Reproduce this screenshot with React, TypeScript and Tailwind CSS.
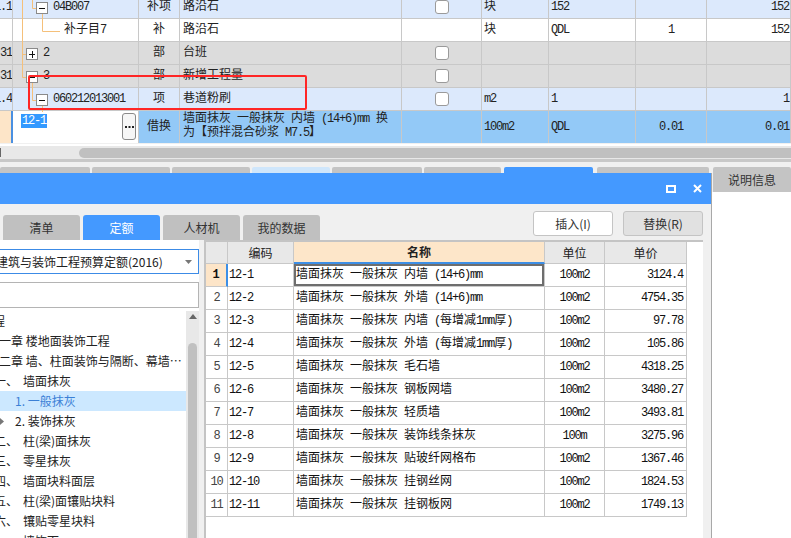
import React from 'react';

const ui = "font-['Noto_Sans_CJK_SC','Noto_Sans',sans-serif]";
const mono = "font-['Liberation_Mono','Noto_Sans_CJK_SC',monospace]";

// Latin runs in the data grids are narrowed so they sit like the bitmap font of the original
const Txt = ({ s }: { s: string }) => (
  <span className="whitespace-pre">
    {s.split(/([\u0000-\u00ff]+)/).map((p, i) =>
      /[\u0000-\u00ff]/.test(p) ? (
        <span key={i} className="tracking-[-1.2px]">
          {p}
        </span>
      ) : (
        p
      )
    )}
  </span>
);

const topRows = [
  { no: '1.1', pad: 'pl-[40px]', code: '04B007', type: '补项', name: '路沿石', check: true, unit: '块', expr: '152', qty: '', total: '152', bg: 'bg-[#dce9fc]' },
  { no: '', pad: 'pl-[51px]', code: '补子目7', type: '补', name: '路沿石', check: false, unit: '块', expr: 'QDL', qty: '1', total: '152', bg: 'bg-white' },
  { no: '31', pad: 'pl-[30px]', code: '2', type: '部', name: '台班', check: true, unit: '', expr: '', qty: '', total: '', bg: 'bg-[#dcdcdc]' },
  { no: '31', pad: 'pl-[30px]', code: '3', type: '部', name: '新增工程量', check: true, unit: '', expr: '', qty: '', total: '', bg: 'bg-[#dcdcdc]' },
  { no: '1.4', pad: 'pl-[40px]', code: '060212013001', type: '项', name: '巷道粉刷', check: true, unit: 'm2', expr: '1', qty: '', total: '1', bg: 'bg-[#dce9fc]' },
];

const cell = 'border-r border-b border-[#c8c8c8] flex items-center overflow-hidden whitespace-nowrap';

function TopTable() {
  return (
    <div className={`relative h-[144px] overflow-hidden ${mono} text-[12px] text-[#222]`}>
      <div className="-mt-[4px]">
        {topRows.map((r, i) => (
          <div key={i} className={`flex h-[23px] ${r.bg}`}>
            <div className={`${cell} w-[13px] justify-end`}>
              <Txt s={r.no} />
            </div>
            <div className={`${cell} w-[126px] ${r.pad}`}>
              <Txt s={r.code} />
            </div>
            <div className={`${cell} w-[41px] justify-center`}>{r.type}</div>
            <div className={`${cell} w-[222px] pl-[3px]`}>{r.name}</div>
            <div className={`${cell} w-[80px] justify-center`}>
              {r.check && <div className="w-[14px] h-[14px] rounded-[3px] border border-[#9a9a9a] bg-white" />}
            </div>
            <div className={`${cell} w-[67px] pl-[2px]`}>
              <Txt s={r.unit} />
            </div>
            <div className={`${cell} w-[87px] pl-[2px]`}>
              <Txt s={r.expr} />
            </div>
            <div className={`${cell} w-[71px] justify-center`}>
              <Txt s={r.qty} />
            </div>
            <div className={`${cell} w-[84px] justify-end pr-[1px]`}>
              <Txt s={r.total} />
            </div>
          </div>
        ))}
        <div className="flex h-[32px]">
          <div className="w-[13px] bg-[#fde5c8] border-r-2 border-[#4a90e2]" />
          <div className="w-[126px] bg-white border-r border-[#c8c8c8] flex justify-between items-start">
            <span className="ml-[8px] mt-[3px] px-[1px] leading-[14px] bg-[#3399ff] text-white">
              <Txt s="12-1" />
            </span>
            <div className="mt-[2px] mr-[2px] w-[14px] h-[27px] rounded-[3px] border border-[#8a8a8a] bg-[#f6f6f6] flex items-center justify-center">
              <svg width="9" height="2" viewBox="0 0 9 2">
                <rect x="0" y="0" width="2" height="2" fill="#222" />
                <rect x="3.5" y="0" width="2" height="2" fill="#222" />
                <rect x="7" y="0" width="2" height="2" fill="#222" />
              </svg>
            </div>
          </div>
          <div className="flex flex-1 bg-[#93c9f7]">
            <div className={`${cell} border-b-0 w-[41px] justify-center`}>借换</div>
            <div className="w-[222px] border-r border-[#c8c8c8] pl-[3px] pt-[1px] leading-[14px] whitespace-nowrap overflow-hidden">
              <div>
                <Txt s="墙面抹灰 一般抹灰 内墙 (14+6)mm" />
                <span className="ml-[7px]">换</span>
              </div>
              <div>
                <Txt s="为【预拌混合砂浆 M7.5】" />
              </div>
            </div>
            <div className={`${cell} border-b-0 w-[80px]`} />
            <div className={`${cell} border-b-0 w-[67px] pl-[2px]`}>
              <Txt s="100m2" />
            </div>
            <div className={`${cell} border-b-0 w-[87px] pl-[2px]`}>
              <Txt s="QDL" />
            </div>
            <div className={`${cell} border-b-0 w-[71px] justify-center`}>
              <Txt s="0.01" />
            </div>
            <div className={`${cell} border-b-0 w-[84px] justify-end pr-[1px]`}>
              <Txt s="0.01" />
            </div>
          </div>
        </div>
      </div>

      {/* tree connector lines and expand boxes */}
      <svg className="absolute left-0 top-0" width="140" height="144" viewBox="0 0 140 144">
        <g stroke="#f5c07a" strokeWidth="1" fill="none">
          <path d="M22.5 0 V77.5 M22.5 54.5 H26 M22.5 77.5 H26" />
          <path d="M32.5 0 V8.5 H36" />
          <path d="M42.5 14 V31.5 H60" />
          <path d="M32.5 83 V100.5 H36" />
          <path d="M42.5 106 V112" />
        </g>
        <g stroke="#8a8a8a" fill="#fff">
          <rect x="36.5" y="2.5" width="11" height="11" />
          <rect x="26.5" y="48.5" width="11" height="11" />
          <rect x="26.5" y="71.5" width="11" height="11" />
          <rect x="36.5" y="94.5" width="11" height="11" />
        </g>
        <g stroke="#111" strokeWidth="1">
          <path d="M39 8.5 H45" />
          <path d="M29 54.5 H35 M32.5 51 V58" />
          <path d="M29 77.5 H35" />
          <path d="M39 100.5 H45" />
        </g>
      </svg>

      {/* red annotation box */}
      <div className="absolute left-[28px] top-[75px] w-[279px] h-[35px] border-2 border-[#ff2626] rounded-[2px]" />
    </div>
  );
}

const tree: { label: string; kind: 'top' | 'ch' | 'sec' | 'sub'; pre?: string; sel?: boolean; arrow?: boolean }[] = [
  { label: '工程', kind: 'top' },
  { label: '一章 楼地面装饰工程', kind: 'ch' },
  { label: '二章 墙、柱面装饰与隔断、幕墙工程', kind: 'ch' },
  { pre: '一、', label: '墙面抹灰', kind: 'sec' },
  { label: '1. 一般抹灰', kind: 'sub', sel: true },
  { label: '2. 装饰抹灰', kind: 'sub', arrow: true },
  { pre: '二、', label: '柱(梁)面抹灰', kind: 'sec' },
  { pre: '三、', label: '零星抹灰', kind: 'sec' },
  { pre: '四、', label: '墙面块料面层', kind: 'sec' },
  { pre: '五、', label: '柱(梁)面镶贴块料', kind: 'sec' },
  { pre: '六、', label: '镶贴零星块料', kind: 'sec' },
  { pre: '七、', label: '墙饰面', kind: 'sec' },
];

function LeftPanel() {
  return (
    <div className="w-[199px] bg-white flex flex-col">
      <div className="mt-[9px] h-[25px] border border-l-0 border-[#3c8be6] flex items-center justify-between pr-[6px] overflow-hidden">
        <span className="-ml-[4px] whitespace-nowrap text-[12px] text-[#222]">建筑与装饰工程预算定额(2016)</span>
        <svg width="7" height="4" viewBox="0 0 7 4">
          <path d="M0 0 H7 L3.5 4 Z" fill="#777" />
        </svg>
      </div>
      <div className="mt-[8px] h-[26px] border border-l-0 border-[#b4b4b4]" />
      <div className="mt-[3px] flex-1 flex overflow-hidden">
        <div className="w-[186px] overflow-hidden">
          {tree.map((t, i) => (
            <div
              key={i}
              className={`h-[20px] flex items-center whitespace-nowrap ${t.sel ? 'bg-[#cce8ff] text-[#3b80d6]' : 'text-[#222]'}`}
            >
              {t.kind === 'top' && <span className="-ml-[19px]">{t.label}</span>}
              {t.kind === 'ch' && <span className="-ml-[1px] truncate">{t.label}</span>}
              {t.kind === 'sec' && (
                <>
                  <span className="-ml-[6px] w-[29px] shrink-0">{t.pre}</span>
                  <span>{t.label}</span>
                </>
              )}
              {t.kind === 'sub' && (
                <>
                  <span className="w-[15px] shrink-0 flex items-center">
                    {t.arrow && (
                      <svg width="4" height="7" viewBox="0 0 4 7">
                        <path d="M0 0 L4 3.5 L0 7 Z" fill="#777" />
                      </svg>
                    )}
                  </span>
                  <span>{t.label}</span>
                </>
              )}
            </div>
          ))}
        </div>
        <div className="w-[13px] bg-[#e8e8e8] flex flex-col items-center">
          <svg className="mt-[3px]" width="8" height="5" viewBox="0 0 8 5">
            <path d="M4 0 L8 5 H0 Z" fill="#666" />
          </svg>
          <div className="mt-[24px] w-[9px] flex-1 rounded-t-full bg-[#c0c0c0]" />
        </div>
      </div>
    </div>
  );
}

const items = [
  ['12-1', '墙面抹灰 一般抹灰 内墙 (14+6)mm', '100m2', '3124.4'],
  ['12-2', '墙面抹灰 一般抹灰 外墙 (14+6)mm', '100m2', '4754.35'],
  ['12-3', '墙面抹灰 一般抹灰 内墙 (每增减1mm厚)', '100m2', '97.78'],
  ['12-4', '墙面抹灰 一般抹灰 外墙 (每增减1mm厚)', '100m2', '105.86'],
  ['12-5', '墙面抹灰 一般抹灰 毛石墙', '100m2', '4318.25'],
  ['12-6', '墙面抹灰 一般抹灰 钢板网墙', '100m2', '3480.27'],
  ['12-7', '墙面抹灰 一般抹灰 轻质墙', '100m2', '3493.81'],
  ['12-8', '墙面抹灰 一般抹灰 装饰线条抹灰', '100m', '3275.96'],
  ['12-9', '墙面抹灰 一般抹灰 贴玻纤网格布', '100m2', '1367.46'],
  ['12-10', '墙面抹灰 一般抹灰 挂钢丝网', '100m2', '1824.53'],
  ['12-11', '墙面抹灰 一般抹灰 挂钢板网', '100m2', '1749.13'],
];

const gc = 'border-r border-b border-[#c8c8c8] flex items-center overflow-hidden whitespace-nowrap';

function Grid() {
  return (
    <div className="ml-[5px] w-[499px] bg-white border-l-2 border-t-2 border-[#c4c4c4]">
      <div className="flex h-[22px] text-[12px] text-[#222]">
        <div className={`${gc} w-[22px] bg-[#e8e8e8]`} />
        <div className={`${gc} w-[66px] bg-[#e8e8e8] justify-center`}>编码</div>
        <div className="w-[251px] bg-[#fde6c9] border-r border-[#c8c8c8] border-b-2 border-b-[#3d8fe6] flex items-center justify-center font-bold">
          名称
        </div>
        <div className={`${gc} w-[60px] bg-[#e8e8e8] justify-center`}>单位</div>
        <div className={`${gc} w-[82px] bg-[#e8e8e8] justify-center`}>单价</div>
      </div>
      <div className={`${mono} text-[12px] text-[#111]`}>
        {items.map((it, i) => (
          <div key={i} className="flex h-[23px]">
            {i === 0 ? (
              <div className="w-[22px] bg-[#fde5c8] border-r-2 border-b border-r-[#3d8fe6] border-b-[#c8c8c8] flex items-center justify-center font-bold">
                1
              </div>
            ) : (
              <div className={`${gc} w-[22px] justify-center text-[#444]`}>
                <Txt s={String(i + 1)} />
              </div>
            )}
            <div className={`${gc} w-[66px] pl-[1px]`}>
              <Txt s={it[0]} />
            </div>
            <div className={`${gc} w-[251px] pl-[2px] ${i === 0 ? 'shadow-[inset_0_0_0_2px_#6e6e6e]' : ''}`}>
              <Txt s={it[1]} />
            </div>
            <div className={`${gc} w-[60px] justify-center`}>
              <Txt s={it[2]} />
            </div>
            <div className={`${gc} w-[82px] justify-end pr-[3px]`}>
              <Txt s={it[3]} />
            </div>
          </div>
        ))}
      </div>
    </div>
  );
}

function Dialog() {
  return (
    <div className="flex-1 flex flex-col border-r border-[#a8a8a8] min-h-0">
      <div className="h-[31px] bg-[#4499ff] flex items-center justify-end gap-[17px] pr-[9px] shrink-0">
        <svg width="10" height="8" viewBox="0 0 10 8">
          <rect x="1" y="1" width="8" height="6" fill="none" stroke="#fff" strokeWidth="2" />
        </svg>
        <svg width="9" height="9" viewBox="0 0 9 9">
          <path d="M1 1 L8 8 M8 1 L1 8" stroke="#fff" strokeWidth="2" />
        </svg>
      </div>
      <div className="flex-1 flex flex-col bg-[#f0f0f0] min-h-0">
        <div className="h-[36px] flex justify-between shrink-0">
          <div className="flex items-end gap-[3px] text-[#333]">
            <div className="w-[0px]" />
            <div className="w-[77px] h-[25px] rounded-t-[3px] bg-[#c0c0c0] flex items-center justify-center">清单</div>
            <div className="w-[77px] h-[25px] rounded-t-[3px] bg-[#4499ff] text-white flex items-center justify-center">定额</div>
            <div className="w-[77px] h-[25px] rounded-t-[3px] bg-[#c0c0c0] flex items-center justify-center">人材机</div>
            <div className="w-[77px] h-[25px] rounded-t-[3px] bg-[#c0c0c0] flex items-center justify-center">我的数据</div>
          </div>
          <div className="flex gap-[10px] pt-[7px] pr-[8px]">
            <div className="w-[80px] h-[25px] rounded-[3px] border border-[#c4c4c4] bg-white flex items-center justify-center text-[#333]">
              插入(I)
            </div>
            <div className="w-[80px] h-[25px] rounded-[3px] border border-[#c4c4c4] bg-[#e1e1e1] flex items-center justify-center text-[#333]">
              替换(R)
            </div>
          </div>
        </div>
        <div className="flex-1 flex min-h-0 overflow-hidden">
          <LeftPanel />
          <Grid />
        </div>
      </div>
    </div>
  );
}

export default function App() {
  return (
    <div className={`w-[791px] h-[538px] overflow-hidden bg-[#f0f0f0] ${ui} text-[12px] text-[#333]`}>
      <TopTable />
      <div className="h-[15px] bg-[#e8e8e8] border-t-2 border-white flex items-center">
        <div className="w-[1px] h-[9px] bg-[#666]" />
        <div className="ml-[78px] flex-1 h-[10px] rounded-l-full bg-[#c0c0c0]" />
      </div>
      <div className="h-[3px] bg-[#c8c8c8]" />
      <div className="h-[5px]" />
      <div className="flex h-[371px]">
        <div className="w-[712px] flex flex-col">
          <div className="h-[6px] flex shrink-0">
            <div className="w-[90px] rounded-t-[2px] bg-[#c4c4c4]" />
            <div className="ml-[2px] w-[78px] rounded-t-[2px] bg-[#c4c4c4]" />
            <div className="ml-[2px] w-[78px] rounded-t-[2px] bg-[#c4c4c4]" />
            <div className="ml-[2px] w-[78px] rounded-t-[2px] bg-[#cfe6fb]" />
            <div className="ml-[2px] w-[90px] rounded-t-[2px] bg-[#c4c4c4]" />
            <div className="ml-[2px] w-[77px] rounded-t-[2px] bg-[#c4c4c4]" />
            <div className="ml-[3px] w-[89px] rounded-t-[2px] bg-[#4499ff]" />
            <div className="ml-[4px] w-[112px] rounded-t-[2px] bg-[#c4c4c4]" />
          </div>
          <Dialog />
        </div>
        <div className="flex-1 flex flex-col">
          <div className="ml-[1px] h-[25px] rounded-t-[2px] bg-[#c4c4c4] flex items-center justify-center text-[#333]">说明信息</div>
          <div className="flex-1 bg-white" />
        </div>
      </div>
    </div>
  );
}
